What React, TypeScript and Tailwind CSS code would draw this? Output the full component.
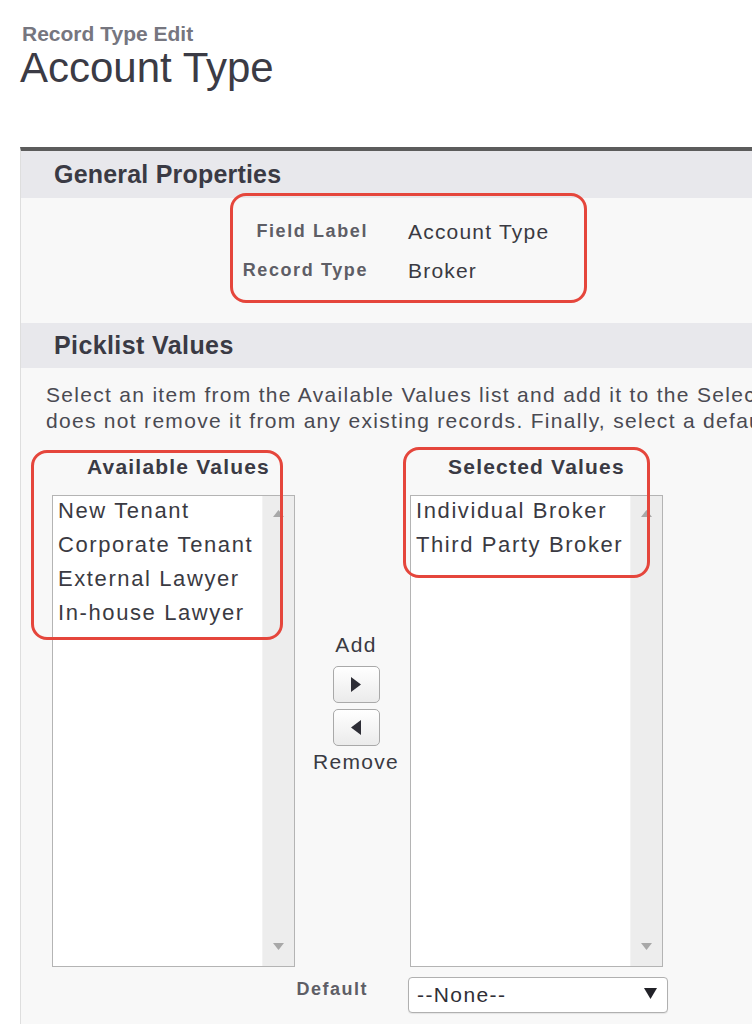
import React from "react";

function UpArrow() {
  return (
    <svg width="11" height="7" viewBox="0 0 11 7">
      <polygon points="5.5,0 11,7 0,7" fill="#a8a8a8" />
    </svg>
  );
}

function DownArrow() {
  return (
    <svg width="11" height="7" viewBox="0 0 11 7">
      <polygon points="0,0 11,0 5.5,7" fill="#a8a8a8" />
    </svg>
  );
}

function ListBox({ items, boxClass }: { items: string[]; boxClass: string }) {
  return (
    <div className={boxClass}>
      <div className="flex-1 pl-[5px] -mt-[2px]">
        {items.map((it) => (
          <div
            key={it}
            className="text-[22px] leading-[34px] tracking-[1.6px] text-[#3a3a42] whitespace-nowrap"
          >
            {it}
          </div>
        ))}
      </div>
      <div className="w-[32px] bg-[#ededed] border-l border-[#f3f3f3] flex flex-col items-center justify-between pt-[14px] pb-[16px]">
        <UpArrow />
        <DownArrow />
      </div>
    </div>
  );
}

function ArrowButton({ dir }: { dir: "right" | "left" }) {
  return (
    <div className="w-[47px] h-[37px] rounded-[5px] border border-[#a9a9a9] bg-gradient-to-b from-[#ffffff] to-[#ebebeb] flex items-center justify-center">
      <svg width="10" height="15" viewBox="0 0 10 15">
        {dir === "right" ? (
          <polygon points="0,0 10,7.5 0,15" fill="#2e2e36" />
        ) : (
          <polygon points="10,0 0,7.5 10,15" fill="#2e2e36" />
        )}
      </svg>
    </div>
  );
}

export default function App() {
  return (
    <div className="w-[752px] h-[1024px] overflow-hidden bg-white relative font-['Liberation_Sans',Arial,sans-serif]">
      {/* Title */}
      <div className="pl-[22px] pt-[24px]">
        <div className="text-[21px] leading-[20px] font-bold text-[#76767f]">Record Type Edit</div>
        <div className="mt-[2px] text-[42px] leading-[44px] text-[#3b3b45] -ml-[2px]">Account Type</div>
      </div>

      {/* Panel */}
      <div className="mt-[57px] ml-[20px] border-t-[4px] border-t-[#5c5c5c] border-l border-l-[#dedede] bg-[#f8f8f8] h-[900px]">
        {/* General Properties header */}
        <div className="h-[47px] bg-[#e8e8ec] pl-[33px] flex items-center">
          <span className="text-[25px] font-bold text-[#3a3a44] tracking-[0.2px]">General Properties</span>
        </div>

        {/* General Properties body */}
        <div className="relative h-[125px] pt-[14px]">
          <div className="flex h-[39px] items-center">
            <div className="w-[347px] text-right text-[18px] font-bold tracking-[1.6px] text-[#5e5e66]">Field Label</div>
            <div className="ml-[40px] text-[21px] tracking-[1.2px] text-[#3a3a42]">Account Type</div>
          </div>
          <div className="flex h-[39px] items-center">
            <div className="w-[347px] text-right text-[18px] font-bold tracking-[1.6px] text-[#5e5e66]">Record Type</div>
            <div className="ml-[40px] text-[21px] tracking-[1.2px] text-[#3a3a42]">Broker</div>
          </div>
          <div className="absolute left-[209px] top-[-5px] w-[357px] h-[110px] border-[3px] border-[#e5463c] rounded-[16px]" />
        </div>

        {/* Picklist Values header */}
        <div className="h-[45px] bg-[#e8e8ec] pl-[33px] flex items-center">
          <span className="text-[25px] font-bold text-[#3a3a44] tracking-[0.4px]">Picklist Values</span>
        </div>

        {/* Description */}
        <div className="pt-[14px] pl-[25px] text-[21px] leading-[26px] tracking-[1.3px] text-[#4a4a52] whitespace-nowrap overflow-hidden">
          <div>Select an item from the Available Values list and add it to the Selec</div>
          <div>does not remove it from any existing records. Finally, select a defau</div>
        </div>

        {/* Picklist columns */}
        <div className="relative mt-[21px] ml-[31px] flex">
          <div className="w-[243px] flex flex-col">
            <div className="h-[24px] leading-[24px] text-center text-[21px] font-bold tracking-[1.2px] text-[#3a3a44] pl-[10px]">
              Available Values
            </div>
            <ListBox
              items={["New Tenant", "Corporate Tenant", "External Lawyer", "In-house Lawyer"]}
              boxClass="mt-[16px] w-[243px] h-[472px] flex border border-[#b4b4b4] bg-white"
            />
          </div>

          <div className="w-[115px] flex flex-col items-center pl-[7px] pt-[178px]">
            <div className="text-[21px] leading-[24px] tracking-[1.3px] text-[#3a3a42]">Add</div>
            <div className="mt-[9px]">
              <ArrowButton dir="right" />
            </div>
            <div className="mt-[6px]">
              <ArrowButton dir="left" />
            </div>
            <div className="mt-[4px] text-[21px] leading-[24px] tracking-[1.3px] text-[#3a3a42]">Remove</div>
          </div>

          <div className="w-[253px] flex flex-col">
            <div className="h-[24px] leading-[24px] text-center text-[21px] font-bold tracking-[1.2px] text-[#3a3a44]">
              Selected Values
            </div>
            <ListBox
              items={["Individual Broker", "Third Party Broker"]}
              boxClass="mt-[16px] w-[253px] h-[472px] flex border border-[#b4b4b4] bg-white"
            />
          </div>

          <div className="absolute left-[-21px] top-[-5px] w-[252px] h-[190px] border-[3px] border-[#e5463c] rounded-[16px]" />
          <div className="absolute left-[351px] top-[-8px] w-[247px] h-[131px] border-[3px] border-[#e5463c] rounded-[16px]" />
        </div>

        {/* Default */}
        <div className="flex items-center mt-[10px]">
          <div className="w-[347px] text-right text-[18px] font-bold tracking-[1.5px] text-[#5e5e66] -mt-[12px]">Default</div>
          <div className="ml-[40px] w-[260px] h-[36px] border border-[#b0b0b0] rounded-[4px] bg-white flex items-center justify-between pl-[8px] pr-[10px] shadow-[0_1px_1px_rgba(0,0,0,0.08)]">
            <span className="text-[21px] tracking-[1.4px] text-[#2f2f36]">--None--</span>
            <svg width="13" height="11" viewBox="0 0 13 11" className="-mt-[4px]">
              <polygon points="0,0 13,0 6.5,11" fill="#222228" />
            </svg>
          </div>
        </div>
      </div>
    </div>
  );
}
